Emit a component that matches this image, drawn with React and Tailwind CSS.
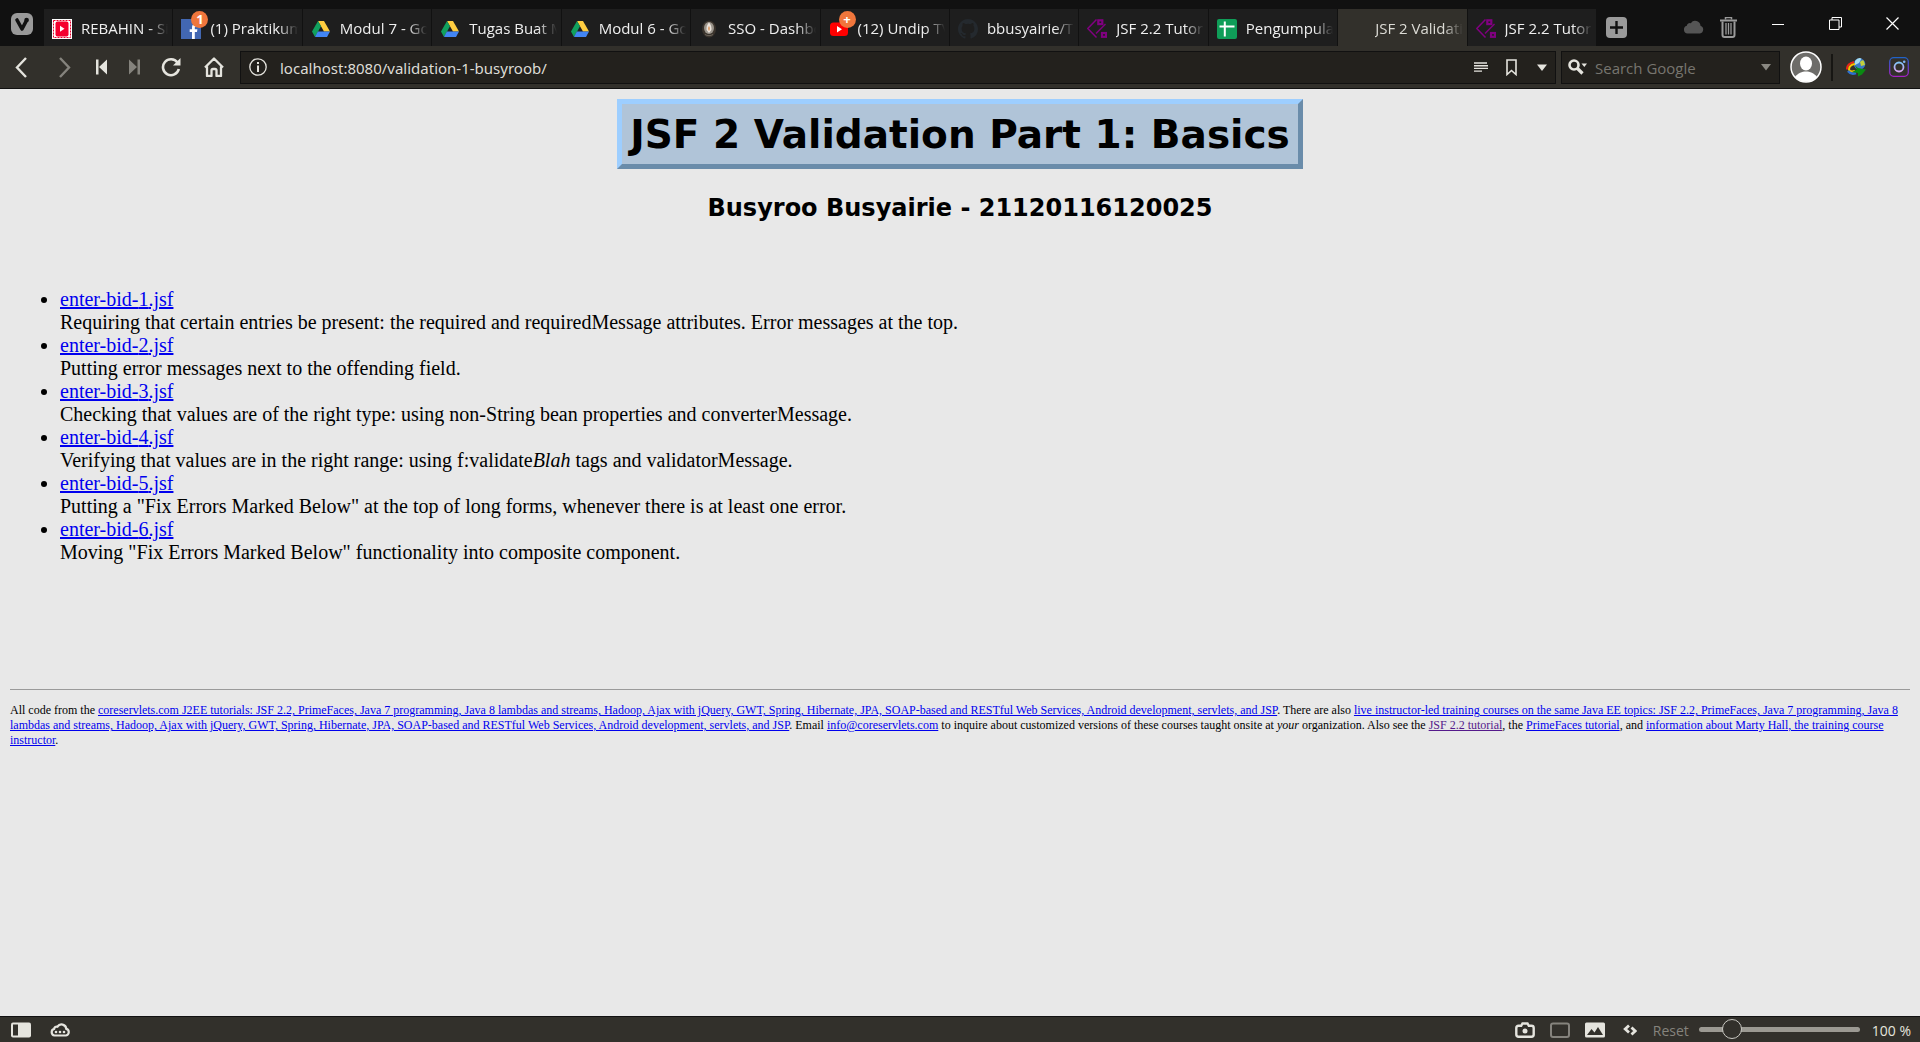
const DriveIcon = () => (
  <svg viewBox="0 0 20 20" className="size-5" aria-hidden="true">
    <path d="M7 2h6l6 10.5h-6z" fill="#ffcd40" />
    <path d="M7 2l3 5.2L4 18l-3-5.5z" fill="#11a05e" />
    <path d="M6.8 12.5H19L16 18H4z" fill="#4285f4" />
  </svg>
);

const RebahinIcon = () => (
  <svg viewBox="0 0 20 20" className="size-5" aria-hidden="true">
    <rect width="20" height="20" fill="#fff" />
    <rect x="1.5" y="1.5" width="17" height="17" fill="none" stroke="#e8002d" strokeDasharray="2 1" />
    <rect x="3.5" y="2.5" width="13" height="15" rx="2" fill="#f5002f" />
    <path d="M8 6.8l4.5 3L8 12.8z" fill="#fff" />
  </svg>
);

const FacebookIcon = () => (
  <svg viewBox="0 0 20 20" className="size-5" aria-hidden="true">
    <rect width="20" height="20" fill="#4267b2" />
    <path d="M11 20v-7H8.7v-2.8H11V8.4C11 6 12.4 4.8 14.6 4.8l1.9.1v2.5h-1.3c-1.1 0-1.4.6-1.4 1.3v1.5h2.6l-.4 2.8h-2.2v7z" fill="#fff" />
  </svg>
);

const SsoIcon = () => (
  <svg viewBox="0 0 20 20" className="size-5" aria-hidden="true">
    <ellipse cx="10" cy="10" rx="7" ry="8.6" fill="#3a332c" />
    <ellipse cx="10" cy="9" rx="5" ry="6" fill="#9b958c" />
    <path d="M10 3.5c2 2.500 2.800 4.500 2.400 7.500L10 14l-2.400-3c-.4-3 .4-5 2.400-7.500z" fill="#ece4dc" />
    <path d="M10 7c1.200 1.500 1.200 3.500 0 5-1.200-1.500-1.200-3.500 0-5z" fill="#dd9a62" />
    <path d="M6 15.500c2.500 1.500 5.500 1.500 8 0" stroke="#6c655b" fill="none" />
  </svg>
);

const YoutubeIcon = () => (
  <svg viewBox="0 0 20 20" className="size-5" aria-hidden="true">
    <rect x="1" y="3.500" width="18" height="13.500" rx="3.500" fill="#f00" />
    <path d="M8 7l5 3.200-5 3.200z" fill="#fff" />
  </svg>
);

const GithubIcon = () => (
  <svg viewBox="0 0 16 16" className="size-5" aria-hidden="true">
    <path
      fill="#24292e"
      d="M8 0C3.580 0 0 3.580 0 8c0 3.540 2.290 6.530 5.470 7.590.4.070.55-.17.55-.38 0-.19-.01-.82-.01-1.490-2.010.37-2.530-.49-2.690-.94-.09-.23-.48-.94-.82-1.130-.28-.15-.68-.52-.01-.53.63-.01 1.080.58 1.230.82.72 1.210 1.870.87 2.330.66.07-.52.28-.87.51-1.070-1.780-.2-3.640-.89-3.640-3.950 0-.87.31-1.590.82-2.150-.08-.2-.36-1.020.08-2.120 0 0 .67-.21 2.200.82a7.600 7.600 0 0 1 4 0c1.530-1.040 2.200-.82 2.200-.82.44 1.100.16 1.920.08 2.120.51.56.82 1.270.82 2.150 0 3.070-1.870 3.750-3.650 3.950.29.25.54.73.54 1.480 0 1.070-.01 1.930-.01 2.200 0 .21.15.46.55.38A8.010 8.010 0 0 0 16 8c0-4.420-3.580-8-8-8z"
    />
  </svg>
);

const JsfIcon = () => (
  <svg viewBox="0 0 20 20" className="size-5" fill="none" stroke="#800080" aria-hidden="true">
    <path d="M9.500.5L.8 9.500l8.700 9" strokeWidth="1.500" />
    <path d="M18.500 5L9 14.500" strokeWidth="1.500" />
    <rect x="11.300" y="1.300" width="4" height="3.800" strokeWidth="2.200" />
    <rect x="15" y="14" width="4" height="3.800" strokeWidth="2.200" />
  </svg>
);

const SheetsIcon = () => (
  <svg viewBox="0 0 20 20" className="size-5" aria-hidden="true">
    <rect width="20" height="20" rx="2" fill="#0f9d58" />
    <path d="M2.500 7.500h15M7.800 2.500v15" stroke="#fff" strokeWidth="2" />
  </svg>
);

const tabs = [
  { label: "REBAHIN - Situs", icon: <RebahinIcon /> },
  { label: "(1) Praktikum", icon: <FacebookIcon />, badge: "1" },
  { label: "Modul 7 - Google", icon: <DriveIcon /> },
  { label: "Tugas Buat Modul", icon: <DriveIcon /> },
  { label: "Modul 6 - Google", icon: <DriveIcon /> },
  { label: "SSO - Dashboard", icon: <SsoIcon /> },
  { label: "(12) Undip TV", icon: <YoutubeIcon />, badge: "+" },
  { label: "bbusyairie/Tutorial", icon: <GithubIcon /> },
  { label: "JSF 2.2 Tutorial", icon: <JsfIcon /> },
  { label: "Pengumpulan", icon: <SheetsIcon /> },
  { label: "JSF 2 Validation", icon: null, active: true },
  { label: "JSF 2.2 Tutorial", icon: <JsfIcon /> },
];

function Tab({ label, icon, badge, active }) {
  return (
    <button
      type="button"
      role="tab"
      aria-selected={!!active}
      className={
        "flex min-w-0 items-center gap-[9px] border-l border-[#111] pt-0.5 pr-1 pl-2 " +
        (active ? "bg-[#32302b] text-[#dcdbd5]" : "bg-[#1e1e1e] text-[#efefef]")
      }
    >
      <span className="relative size-5 shrink-0">
        {icon}
        {badge && (
          <span className="absolute -top-2 left-2.5 flex size-[17px] items-center justify-center rounded-full bg-[#f0763c] text-[13px] leading-none font-bold text-white">
            {badge}
          </span>
        )}
      </span>
      <span className="min-w-0 flex-1 overflow-hidden text-left whitespace-nowrap [mask-image:linear-gradient(to_right,black_78%,transparent)]">
        {label}
      </span>
    </button>
  );
}

function TabBar() {
  return (
    <header className="flex h-[46px] items-stretch bg-[#111] text-[15px]">
      <button type="button" aria-label="Vivaldi menu" className="flex w-[43px] shrink-0 items-center justify-center pt-0.5">
        <svg viewBox="0 0 24 24" className="size-6">
          <rect x="1" y="1" width="22" height="22" rx="6" fill="#9a9a9a" />
          <path d="M7 8l5 9 4.500-8.500" fill="none" stroke="#111" strokeWidth="3.600" strokeLinecap="round" strokeLinejoin="round" />
          <circle cx="16.600" cy="8" r="2.300" fill="#111" />
        </svg>
      </button>
      <div role="tablist" className="mt-[9px] grid min-w-0 flex-[0_1_1553px] grid-cols-12">
        {tabs.map((t, i) => (
          <Tab key={i} {...t} />
        ))}
      </div>
      <button type="button" aria-label="New tab" className="mt-2 ml-2.5 shrink-0">
        <svg viewBox="0 0 21 21" className="size-[21px]">
          <rect width="21" height="21" rx="4" fill="#9a9a9a" />
          <path d="M10.500 4v13M4 10.500h13" stroke="#111" strokeWidth="2.400" />
        </svg>
      </button>
      <div className="ml-auto flex shrink-0 items-center">
        <button type="button" aria-label="Synced tabs" className="mt-2 mr-4">
          <svg viewBox="0 0 21 14" className="h-3.5 w-[21px]">
            <path d="M4.500 13.500a4 4 0 0 1-.7-7.800 3 3 0 0 1 4-2.500 5.300 5.300 0 0 1 9.700 2.600 4 4 0 0 1-.5 7.700z" fill="#555" />
          </svg>
        </button>
        <button type="button" aria-label="Closed tabs" className="mt-2 mr-3">
          <svg viewBox="0 0 17 21" className="h-[21px] w-[17px]" fill="none" stroke="#9a9a9a">
            <path d="M0 3.500h17" strokeWidth="2" />
            <path d="M5.500 2.500v-2h6v2" strokeWidth="1.500" />
            <path d="M2.500 4.500V18q0 2 2 2h8q2 0 2-2V4.500" strokeWidth="2" />
            <path d="M6 6v11.500M8.500 6v11.500M11 6v11.500" strokeWidth="1.300" />
          </svg>
        </button>
        <div className="flex self-start text-white">
          <button type="button" aria-label="Minimize" className="flex h-[46px] w-[58px] items-center justify-center">
            <svg viewBox="0 0 13 13" className="size-[13px]">
              <path d="M0 7.500h12" stroke="currentColor" />
            </svg>
          </button>
          <button type="button" aria-label="Restore" className="flex h-[46px] w-[57px] items-center justify-center">
            <svg viewBox="0 0 13 13" className="size-[13px]" fill="none" stroke="currentColor">
              <path d="M.5 3h9.500v9.500H.5zM3 3V.5h9.500V10H10" />
            </svg>
          </button>
          <button type="button" aria-label="Close" className="flex h-[46px] w-14 items-center justify-center">
            <svg viewBox="0 0 13 13" className="size-[13px]">
              <path d="M.5.5l12 12M12.500.5l-12 12" stroke="currentColor" strokeWidth="1.200" />
            </svg>
          </button>
        </div>
      </div>
    </header>
  );
}

function NavBar() {
  return (
    <nav className="flex h-[43px] items-center border-b border-[#111] bg-[#32302b] text-[15px] text-[#e5e4de]">
      <div className="flex w-60 shrink-0 items-center">
        <button type="button" aria-label="Back" className="flex w-[42px] justify-center">
          <svg viewBox="0 0 12 21" className="h-[21px] w-3" fill="none" stroke="currentColor" strokeWidth="2.400">
            <path d="M11 1L2 10.500 11 20" />
          </svg>
        </button>
        <button type="button" aria-label="Forward" disabled className="flex w-[45px] justify-center text-[#85837d]">
          <svg viewBox="0 0 12 21" className="h-[21px] w-3" fill="none" stroke="currentColor" strokeWidth="2.400">
            <path d="M1 1l9 9.500L1 20" />
          </svg>
        </button>
        <button type="button" aria-label="Rewind" className="flex w-[29px] justify-center">
          <svg viewBox="0 0 11 16" className="h-4 w-[11px]" fill="currentColor">
            <path d="M0 .5h2.500v15H0zM11 .5v15L3 8z" />
          </svg>
        </button>
        <button type="button" aria-label="Fast forward" disabled className="flex w-9 justify-center text-[#85837d]">
          <svg viewBox="0 0 11 16" className="h-4 w-[11px]" fill="currentColor">
            <path d="M8.500.5H11v15H8.500zM0 .5v15L8 8z" />
          </svg>
        </button>
        <button type="button" aria-label="Reload" className="flex w-[38px] justify-center">
          <svg viewBox="0 0 20 20" className="size-5">
            <path d="M16.500 5.500A8 8 0 1 0 17.800 12" fill="none" stroke="currentColor" strokeWidth="2.600" />
            <path d="M19.500 1v7.500H12z" fill="currentColor" />
          </svg>
        </button>
        <button type="button" aria-label="Home" className="flex w-12 justify-center">
          <svg viewBox="0 0 20 20" className="size-5" fill="none" stroke="currentColor" strokeWidth="2.300" strokeLinejoin="round">
            <path d="M1 10.500L10 1.500l9 9M3 9.500V19h4.500v-5.500q0-1.500 1.500-1.500h2q1.500 0 1.500 1.500V19H17V9.500" />
          </svg>
        </button>
      </div>
      <div className="flex h-[33px] min-w-0 flex-1 items-center border border-[#111] bg-[#23211d] pr-2 pl-2">
        <button type="button" aria-label="Site information" className="shrink-0">
          <svg viewBox="0 0 18 18" className="size-[18px]" fill="none" stroke="currentColor">
            <circle cx="9" cy="9" r="8.200" strokeWidth="1.300" />
            <path d="M9 7.500V14M9 4v2" strokeWidth="2" />
          </svg>
        </button>
        <input
          aria-label="Address"
          defaultValue="localhost:8080/validation-1-busyroob/"
          className="ml-[13px] min-w-0 flex-1 bg-transparent pt-0.5 font-['Noto_Sans',sans-serif] text-[#dddcd6] outline-none"
        />
        <button type="button" aria-label="Reader view" className="mr-[18px]">
          <svg viewBox="0 0 14 10" className="h-2.5 w-3.5" stroke="currentColor" strokeWidth="1.400">
            <path d="M0 1h13M0 3.700h14M0 6.400h14M0 9.100h8" />
          </svg>
        </button>
        <button type="button" aria-label="Bookmark page" className="mr-5">
          <svg viewBox="0 0 11 17" className="h-[17px] w-[11px]" fill="none" stroke="currentColor" strokeWidth="1.600">
            <path d="M1 1h9v14.500l-4.500-4-4.500 4z" />
          </svg>
        </button>
        <button type="button" aria-label="Address history">
          <svg viewBox="0 0 10 7" className="h-[7px] w-2.5" fill="currentColor">
            <path d="M0 .5h10L5 7z" />
          </svg>
        </button>
      </div>
      <div className="ml-[5px] flex h-[33px] w-[219px] shrink-0 items-center border border-[#111] bg-[#23211d] pr-2 pl-1.5">
        <button type="button" aria-label="Choose search engine">
          <svg viewBox="0 0 19 16" className="h-4 w-[19px]">
            <circle cx="6" cy="6" r="4.500" fill="none" stroke="currentColor" strokeWidth="2.600" />
            <path d="M9 9l5.500 5.500" stroke="currentColor" strokeWidth="3.200" />
            <path d="M13.500 4.500h5.500l-2.700 3.500z" fill="currentColor" />
          </svg>
        </button>
        <input
          aria-label="Search"
          placeholder="Search Google"
          className="ml-2 min-w-0 flex-1 bg-transparent pt-0.5 outline-none placeholder:text-[#77756f]"
        />
        <button type="button" aria-label="Search options" className="text-[#8a8882]">
          <svg viewBox="0 0 10 7" className="h-[7px] w-2.5" fill="currentColor">
            <path d="M0 0h10L5 6.500z" />
          </svg>
        </button>
      </div>
      <button type="button" aria-label="Profile" className="ml-2.5 shrink-0">
        <svg viewBox="0 0 32 32" className="size-8">
          <circle cx="16" cy="16" r="15" fill="#6d6c69" stroke="#fff" strokeWidth="1.500" />
          <ellipse cx="16" cy="12.500" rx="6" ry="7" fill="#fff" />
          <path d="M5 26c3-4 7-5.500 11-5.500S24 22 27 26a15 15 0 0 1-22 0z" fill="#fff" />
        </svg>
      </button>
      <div className="ml-[9px] h-[27px] w-0.5 bg-[#171613]" />
      <button type="button" aria-label="Download manager" className="ml-[13px] shrink-0">
        <svg viewBox="0 0 20 20" className="size-5" fill="none">
          <circle cx="13.500" cy="7" r="5.800" fill="#3a78c8" />
          <path d="M9 4q3-4 6.500-2.500L13 6l-4 2z" fill="#a5dcf2" />
          <path d="M14 5q3-3 4-.5l1 3.500-4 1z" fill="#c3cf3a" />
          <path d="M8 5Q.5 7 1 12.500" stroke="#e8251a" strokeWidth="2" />
          <path d="M9 7q-6 1-6 5.500 1 3 6 1.500" stroke="#f5c400" strokeWidth="2" />
          <path d="M2 14q3 4 8 2" stroke="#2c6fd0" strokeWidth="2.500" />
          <path d="M9 8.500l3 2.500 8 1.500-4 5-4 2v-3.500L6 15l5-2.500z" fill="#0a8a12" />
        </svg>
      </button>
      <button type="button" aria-label="Instagram" className="mr-[11px] ml-[23px] shrink-0">
        <svg viewBox="0 0 20 20" className="size-5" fill="none">
          <defs>
            <linearGradient id="ig-frame" x1="0" y1="0" x2="0" y2="1">
              <stop offset="0" stopColor="#2062c8" />
              <stop offset="1" stopColor="#a51fc4" />
            </linearGradient>
            <linearGradient id="ig-lens" x1="0" y1="0" x2="0" y2="1">
              <stop offset="0" stopColor="#7fc4f5" />
              <stop offset="1" stopColor="#d9a2f0" />
            </linearGradient>
          </defs>
          <rect x=".7" y=".7" width="18.600" height="18.600" rx="4" stroke="url(#ig-frame)" strokeWidth="1.300" />
          <circle cx="10" cy="10" r="4.500" stroke="url(#ig-lens)" strokeWidth="1.800" />
          <circle cx="15.200" cy="4.700" r="1.300" fill="#7fb4f5" />
        </svg>
      </button>
    </nav>
  );
}

const bids = [
  "Requiring that certain entries be present: the required and requiredMessage attributes. Error messages at the top.",
  "Putting error messages next to the offending field.",
  "Checking that values are of the right type: using non-String bean properties and converterMessage.",
  <>
    Verifying that values are in the right range: using f:validate<i>Blah</i> tags and validatorMessage.
  </>,
  'Putting a "Fix Errors Marked Below" at the top of long forms, whenever there is at least one error.',
  'Moving "Fix Errors Marked Below" functionality into composite component.',
];

const Link = ({ children, visited }) => (
  <a href="#" className={visited ? "text-[#551a8b] underline" : "text-[#0000ee] underline"}>
    {children}
  </a>
);

function Page() {
  return (
    <main className="flex-1 bg-[#e8e8e8] px-2.5 pt-2.5 font-['Liberation_Serif',serif] text-xl leading-[23px] text-black">
      <h1 className="mx-auto w-fit border-5 border-t-[#9dceff] border-r-[#6a8caa] border-b-[#6a8caa] border-l-[#9dceff] bg-[#b0c4d8] px-2 pt-[7px] pb-[5px] font-['DejaVu_Sans',sans-serif] text-[39px] leading-[48px] font-bold">
        JSF 2 Validation Part 1: Basics
      </h1>
      <h2 className="mt-[25px] text-center font-['DejaVu_Sans',sans-serif] text-2xl leading-[29px] font-bold">
        Busyroo Busyairie - 21120116120025
      </h2>
      <ul className="mt-[65px] list-disc pl-[50px]">
        {bids.map((text, i) => (
          <li key={i}>
            <Link>enter-bid-{i + 1}.jsf</Link>
            <br />
            {text}
          </li>
        ))}
      </ul>
      <hr className="mt-[125px] border-t border-[#9a9a9a]" />
      <p className="mt-[13px] text-xs leading-[15px]">
        All code from the{" "}
        <Link>
          coreservlets.com J2EE tutorials: JSF 2.2, PrimeFaces, Java 7 programming, Java 8 lambdas and streams, Hadoop,
          Ajax with jQuery, GWT, Spring, Hibernate, JPA, SOAP-based and RESTful Web Services, Android development,
          servlets, and JSP
        </Link>
        . There are also{" "}
        <Link>
          live instructor-led training courses on the same Java EE topics: JSF 2.2, PrimeFaces, Java 7 programming, Java
          8 lambdas and streams, Hadoop, Ajax with jQuery, GWT, Spring, Hibernate, JPA, SOAP-based and RESTful Web
          Services, Android development, servlets, and JSP
        </Link>
        . Email <Link>info@coreservlets.com</Link> to inquire about customized versions of these courses taught onsite at{" "}
        <i>your</i> organization. Also see the <Link visited>JSF 2.2 tutorial</Link>, the{" "}
        <Link>PrimeFaces tutorial</Link>, and <Link>information about Marty Hall, the training course instructor</Link>.
      </p>
    </main>
  );
}

function StatusBar() {
  return (
    <footer className="flex h-[26px] items-center border-t border-[#111] bg-[#32302b] pr-[9px] pl-[11px] text-sm text-[#e5e4de]">
      <button type="button" aria-label="Toggle panel">
        <svg viewBox="0 0 20 16" className="h-4 w-5">
          <rect y=".5" width="20" height="15" rx="2" fill="currentColor" />
          <rect x="2" y="2.500" width="5" height="11" fill="#32302b" />
        </svg>
      </button>
      <button type="button" aria-label="Sync status" className="ml-[19px]">
        <svg viewBox="0 0 20 14" className="h-3.5 w-5">
          <path d="M4.500 12.500a3.400 3.400 0 0 1-.4-6.600 2.600 2.600 0 0 1 3.400-2.200 4.800 4.800 0 0 1 8.800 2.200 3.400 3.400 0 0 1-.3 6.600z" fill="none" stroke="currentColor" strokeWidth="2.200" />
          <circle cx="6" cy="9" r="1.300" fill="currentColor" />
          <circle cx="10" cy="9" r="1.300" fill="currentColor" />
          <circle cx="14" cy="9" r="1.300" fill="currentColor" />
        </svg>
      </button>
      <div className="ml-auto flex items-center">
        <button type="button" aria-label="Capture page">
          <svg viewBox="0 0 20 16" className="h-4 w-5">
            <path d="M3.500 3.800h2.700L7.500 1.500h5l1.300 2.300h2.700q2.200 0 2.200 2.200v6.500q0 2.200-2.200 2.200h-13q-2.200 0-2.200-2.200V6q0-2.200 2.200-2.200z" fill="none" stroke="currentColor" strokeWidth="2.400" />
            <circle cx="10" cy="9" r="2.500" fill="currentColor" />
          </svg>
        </button>
        <button type="button" aria-label="Tile tabs" className="ml-[15px] text-[#85837d]">
          <svg viewBox="0 0 20 16" className="h-4 w-5">
            <rect x="1" y="1.500" width="18" height="13.500" rx="2" fill="none" stroke="currentColor" strokeWidth="2" />
          </svg>
        </button>
        <button type="button" aria-label="Images" className="ml-[15px]">
          <svg viewBox="0 0 20 16" className="h-4 w-5">
            <rect y=".5" width="20" height="15" rx="1.500" fill="currentColor" />
            <path d="M2 13l4.500-6 3 3.500L13 5l5 8z" fill="#32302b" />
          </svg>
        </button>
        <button type="button" aria-label="Page actions" className="ml-[18px]">
          <svg viewBox="0 0 14 12" className="h-3 w-3.5" fill="none" stroke="currentColor" strokeWidth="2.800">
            <path d="M6 1.500L2.200 5 6 8.500M8.500 3.500L12.200 7 8.500 10.500" />
          </svg>
        </button>
        <button type="button" className="ml-4 pt-0.5 text-[#85837d]">
          Reset
        </button>
        <input
          type="range"
          aria-label="Zoom"
          min="20"
          max="500"
          defaultValue="100"
          className="ml-2.5 h-5 w-[161px] appearance-none bg-transparent [&::-webkit-slider-runnable-track]:h-[5px] [&::-webkit-slider-runnable-track]:rounded-full [&::-webkit-slider-runnable-track]:bg-[#9b9992] [&::-webkit-slider-thumb]:-mt-2 [&::-webkit-slider-thumb]:size-5 [&::-webkit-slider-thumb]:appearance-none [&::-webkit-slider-thumb]:rounded-full [&::-webkit-slider-thumb]:border [&::-webkit-slider-thumb]:border-[#c9c8c2] [&::-webkit-slider-thumb]:bg-[#32302b]"
        />
        <output className="ml-3 pt-0.5">100 %</output>
      </div>
    </footer>
  );
}

export default function App() {
  return (
    <div className="flex min-h-screen flex-col font-['Open_Sans','Noto_Sans',sans-serif]">
      <TabBar />
      <NavBar />
      <Page />
      <StatusBar />
    </div>
  );
}
